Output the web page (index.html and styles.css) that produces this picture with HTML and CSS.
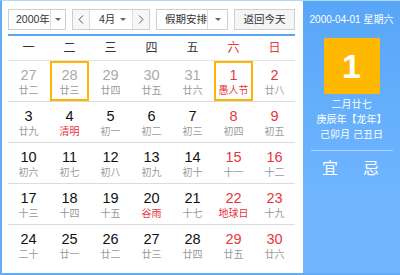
FILE: index.html
```html
<!DOCTYPE html>
<html lang="zh">
<head>
<meta charset="utf-8">
<link rel="stylesheet" href="styles.css">
</head>
<body>
<div class="cal">
  <div class="main">
    <div class="toolbar">
      <div class="box year"><span class="val">2000年</span><span class="arr"><i class="tri"></i></span></div>
      <div class="box month">
        <span class="nav"><svg width="6" height="9" viewBox="0 0 6 9"><path d="M5 0.5 L1 4.5 L5 8.5" fill="none" stroke="#555" stroke-width="1"/></svg></span>
        <span class="mval"><span>4月</span><i class="tri"></i></span>
        <span class="nav"><svg width="6" height="9" viewBox="0 0 6 9"><path d="M1 0.5 L5 4.5 L1 8.5" fill="none" stroke="#555" stroke-width="1"/></svg></span>
      </div>
      <div class="box holiday"><span class="val">假期安排</span><span class="arr"><i class="tri"></i></span></div>
      <div class="box today">返回今天</div>
    </div>
    <div class="week">
      <span>一</span><span>二</span><span>三</span><span>四</span><span>五</span><span class="red">六</span><span class="red">日</span>
    </div>
    <div class="rows">
      <div class="row">
        <div class="day other"><b>27</b><em>廿二</em></div>
        <div class="day other sel"><b>28</b><em>廿三</em></div>
        <div class="day other"><b>29</b><em>廿四</em></div>
        <div class="day other"><b>30</b><em>廿五</em></div>
        <div class="day other"><b>31</b><em>廿六</em></div>
        <div class="day we sel"><b>1</b><em class="fest">愚人节</em></div>
        <div class="day we"><b>2</b><em>廿八</em></div>
      </div>
      <div class="row">
        <div class="day"><b>3</b><em>廿九</em></div>
        <div class="day"><b>4</b><em class="fest">清明</em></div>
        <div class="day"><b>5</b><em>初一</em></div>
        <div class="day"><b>6</b><em>初二</em></div>
        <div class="day"><b>7</b><em>初三</em></div>
        <div class="day we"><b>8</b><em>初四</em></div>
        <div class="day we"><b>9</b><em>初五</em></div>
      </div>
      <div class="row">
        <div class="day"><b>10</b><em>初六</em></div>
        <div class="day"><b>11</b><em>初七</em></div>
        <div class="day"><b>12</b><em>初八</em></div>
        <div class="day"><b>13</b><em>初九</em></div>
        <div class="day"><b>14</b><em>初十</em></div>
        <div class="day we"><b>15</b><em>十一</em></div>
        <div class="day we"><b>16</b><em>十二</em></div>
      </div>
      <div class="row">
        <div class="day"><b>17</b><em>十三</em></div>
        <div class="day"><b>18</b><em>十四</em></div>
        <div class="day"><b>19</b><em>十五</em></div>
        <div class="day"><b>20</b><em class="fest">谷雨</em></div>
        <div class="day"><b>21</b><em>十七</em></div>
        <div class="day we"><b>22</b><em class="fest">地球日</em></div>
        <div class="day we"><b>23</b><em>十九</em></div>
      </div>
      <div class="row">
        <div class="day"><b>24</b><em>二十</em></div>
        <div class="day"><b>25</b><em>廿一</em></div>
        <div class="day"><b>26</b><em>廿二</em></div>
        <div class="day"><b>27</b><em>廿三</em></div>
        <div class="day"><b>28</b><em>廿四</em></div>
        <div class="day we"><b>29</b><em>廿五</em></div>
        <div class="day we"><b>30</b><em>廿六</em></div>
      </div>
    </div>
  </div>
  <div class="side">
    <div class="date">2000-04-01 星期六</div>
    <div class="big">1</div>
    <div class="lunar">
      <div>二月廿七</div>
      <div>庚辰年【龙年】</div>
      <div>己卯月 己丑日</div>
    </div>
    <div class="sep"></div>
    <div class="yiji"><span>宜</span><span>忌</span></div>
  </div>
</div>
</body>
</html>
```

FILE: styles.css
```css
* { box-sizing: border-box; }
html, body { margin: 0; padding: 0; background: #fff; }
body { font-family: "Liberation Sans", "Noto Sans CJK SC", sans-serif; }

.cal {
  display: flex;
  width: 400px;
  height: 275px;
  border-left: 2px solid #64acf6;
  border-top: 1px solid #b4d6fb;
  border-bottom: 2px solid #64acf6;
  overflow: hidden;
}

.main {
  width: 301px;
  flex: none;
  padding: 8px 8px 0 6px;
  background: #fff;
}

.toolbar {
  display: flex;
  justify-content: space-between;
  height: 21px;
  margin-bottom: 4px;
}

.box {
  display: flex;
  align-items: stretch;
  height: 21px;
  border: 1px solid #cfcfcf;
  background: #fff;
  font-size: 10.5px;
  color: #333;
  line-height: 19px;
}
.box .val { flex: 1; padding-left: 7px; white-space: nowrap; }
.box .arr {
  width: 16px;
  border-left: 1px solid #dcdcdc;
  display: flex;
  align-items: center;
  justify-content: center;
}
.tri {
  display: block;
  width: 0; height: 0;
  border-left: 3px solid transparent;
  border-right: 3px solid transparent;
  border-top: 3px solid #666;
}
.year { width: 58px; }
.month { width: 78px; }
.holiday { width: 72px; }
.holiday .arr { width: 20px; }
.holiday .val { padding-left: 8px; }
.today {
  width: 61px;
  justify-content: center;
  background: #f5f5f5;
}
.nav {
  width: 16px;
  display: flex;
  align-items: center;
  justify-content: center;
  background: #f7f7f7;
}
.mval {
  flex: 1;
  display: flex;
  align-items: center;
  justify-content: space-between;
  padding: 0 6px 0 9px;
  border-left: 1px solid #dcdcdc;
  border-right: 1px solid #dcdcdc;
}

.week {
  display: grid;
  grid-template-columns: repeat(7, 41px);
  height: 27px;
  border-top: 2px solid #5aa6f6;
  border-bottom: 1px solid #e2e2e2;
  font-size: 12px;
  line-height: 24px;
  color: #333;
  text-align: center;
}
.red { color: #e8343c; }

.row {
  display: grid;
  grid-template-columns: repeat(7, 41px);
  border-bottom: 1px solid #dcdcdc;
}
.row:last-child { border-bottom: none; }

.day {
  height: 40px;
  margin: 0 1px;
  border: 2px solid transparent;
  text-align: center;
}
.day b {
  display: block;
  margin-top: 3px;
  font-weight: normal;
  font-size: 14.5px;
  line-height: 18px;
  color: #111;
  font-family: "Liberation Sans", Arial, sans-serif;
}
.day em {
  display: block;
  font-style: normal;
  font-size: 10px;
  line-height: 13px;
  color: #999;
}
.day.we b { color: #e8343c; }
.day.other b { color: #aaa; }
.day em.fest { color: #e8343c; }
.day.sel { border-color: #ffb400; }

.side {
  flex: 1;
  background: linear-gradient(#58a6f6, #6fb5ff 70%);
  color: #fff;
  text-align: center;
  padding-top: 12px;
}
.date { font-size: 10px; line-height: 14px; white-space: nowrap; }
.big {
  width: 56px;
  height: 56px;
  margin: 11px auto 0;
  background: #ffb800;
  border-radius: 1px;
  font-size: 34px;
  font-weight: bold;
  line-height: 56px;
}
.lunar {
  margin-top: 3px;
  font-size: 10px;
  line-height: 15px;
  white-space: nowrap;
}
.sep {
  width: 82px;
  height: 1px;
  margin: 8px auto 0;
  background: rgba(255,255,255,0.45);
}
.yiji {
  display: flex;
  justify-content: center;
  gap: 25px;
  margin-top: 8px;
  font-size: 16px;
  line-height: 20px;
  padding-right: 2px;
}
```
